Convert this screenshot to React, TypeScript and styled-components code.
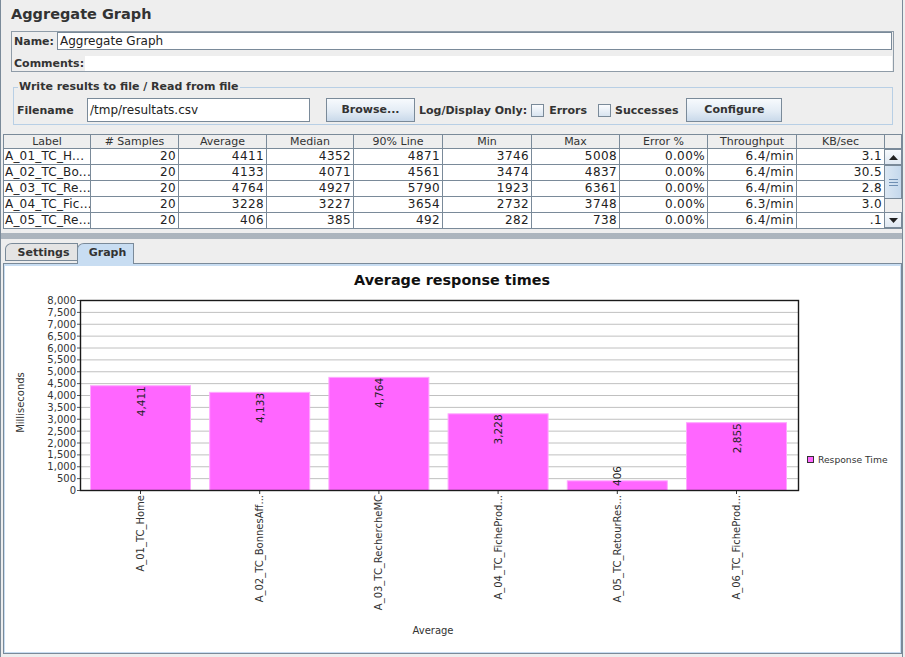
import React from 'react';
import styled, { createGlobalStyle } from 'styled-components';

const GlobalStyle = createGlobalStyle`
  body {
    margin: 0;
    background: #eeeeee;
    font-family: 'DejaVu Sans', sans-serif;
    color: #333333;
  }
`;

const Frame = styled.div`
  width: 903px;
  height: 657px;
  box-sizing: border-box;
  border-left: 1px solid #7a8a99;
  border-right: 1px solid #7a8a99;
  display: flex;
  flex-direction: column;
  overflow: hidden;
`;

const Title = styled.div`
  height: 31px;
  box-sizing: border-box;
  padding: 6px 0 0 10px;
  font-weight: bold;
  font-size: 14.5px;
  line-height: 17px;
`;

const NamePanel = styled.div`
  margin: 0 8px 0 10px;
  height: 41px;
  box-sizing: border-box;
  border: 1px solid #8f9ca8;
  padding: 0 1px;
  display: flex;
  flex-direction: column;
  gap: 6px;
`;

const FieldRow = styled.div<{ $h: number }>`
  display: flex;
  align-items: center;
  height: ${p => p.$h}px;
`;

const BoldLabel = styled.span<{ $w?: number; $ml?: number }>`
  font-weight: bold;
  font-size: 11px;
  white-space: nowrap;
  flex-shrink: 0;
  ${p => (p.$w ? `width: ${p.$w}px;` : '')}
  margin-left: ${p => p.$ml ?? 0}px;
`;

const TextField = styled.div<{ $w?: number; $h: number }>`
  ${p => (p.$w ? `width: ${p.$w}px;` : 'flex: 1;')}
  height: ${p => p.$h}px;
  box-sizing: border-box;
  background: #ffffff;
  border: 1px solid #7a8a99;
  padding-left: 2px;
  font-size: 12px;
  line-height: ${p => p.$h - 2}px;
  white-space: nowrap;
  color: #222;
`;

const BlankArea = styled.div`
  flex: 1;
  height: 15px;
  background: #ffffff;
`;

const FileBox = styled.fieldset`
  margin: 8px 9px 0 12px;
  padding: 4px 3px 2px 3px;
  border: 1px solid #b8cfe5;
  min-width: 0;
`;

const Legend = styled.legend`
  margin-left: 1px;
  padding: 0 1px;
  font-weight: bold;
  font-size: 11px;
  line-height: 14px;
`;

const FileRow = styled.div`
  display: flex;
  align-items: center;
  height: 24px;
`;

const Button = styled.div<{ $w: number; $ml: number }>`
  width: ${p => p.$w}px;
  margin-left: ${p => p.$ml}px;
  height: 24px;
  box-sizing: border-box;
  border: 1px solid #7a8a99;
  background: linear-gradient(#f7fafd, #e3ecf5 55%, #c9d9ea);
  font-weight: bold;
  font-size: 11px;
  line-height: 22px;
  text-align: center;
  flex-shrink: 0;
`;

const CheckBox = styled.div<{ $ml: number }>`
  width: 13px;
  height: 13px;
  box-sizing: border-box;
  margin-left: ${p => p.$ml}px;
  border: 1px solid #7a8a99;
  background: linear-gradient(#fbfcfe, #d8e4f0);
  flex-shrink: 0;
`;

const Table = styled.div`
  margin: 9px 0 0 2px;
  border-left: 1px solid #7a8a99;
  border-top: 1px solid #7a8a99;
  display: grid;
  grid-template-columns: 87px 88px 88px 87px 89px 89px 88px 88px 89px 88px 17px;
  grid-template-rows: 14px repeat(5, 16px);
`;

const HeadCell = styled.div`
  box-sizing: border-box;
  border-right: 1px solid #7a8a99;
  border-bottom: 1px solid #7a8a99;
  background: #eeeeee;
  font-size: 11px;
  line-height: 13px;
  text-align: center;
  white-space: nowrap;
  overflow: hidden;
`;

const Cell = styled.div<{ $left?: boolean }>`
  box-sizing: border-box;
  border-right: 1px solid #7a8a99;
  border-bottom: 1px solid #7a8a99;
  background: #ffffff;
  font-size: 12px;
  line-height: 15px;
  letter-spacing: ${p => (p.$left ? 0.2 : 0.4)}px;
  text-align: ${p => (p.$left ? 'left' : 'right')};
  padding: ${p => (p.$left ? '0 0 0 1px' : '0 2px 0 0')};
  white-space: nowrap;
  overflow: hidden;
  color: #222;
`;

const ScrollBar = styled.div`
  grid-column: 11;
  grid-row: 2 / span 5;
  display: flex;
  flex-direction: column;
  background: #eeeeee;
  border-bottom: 1px solid #7a8a99;
`;

const ArrowButton = styled.div`
  height: 16px;
  box-sizing: border-box;
  border: 1px solid #7a8a99;
  border-left: none;
  background: linear-gradient(#f7fafd, #dfe8f2);
  display: flex;
  align-items: center;
  justify-content: center;
`;

const Track = styled.div`
  flex: 1;
  display: flex;
  flex-direction: column;
`;

const Thumb = styled.div`
  height: 34px;
  box-sizing: border-box;
  border: 1px solid #7a8a99;
  border-left: none;
  background: linear-gradient(90deg, #dbe7f3, #c4d8ec);
  display: flex;
  flex-direction: column;
  align-items: center;
  justify-content: center;
  gap: 2px;
`;

const Grip = styled.div`
  width: 9px;
  height: 1px;
  background: #6f8fb3;
`;

const Splitter = styled.div`
  height: 11px;
  padding-top: 4px;
  box-sizing: border-box;
`;

const Dots = styled.div`
  height: 6px;
  background-image: radial-gradient(circle, #aab3bc 0.7px, transparent 0.9px);
  background-size: 2px 2px;
`;

const TabRow = styled.div`
  display: flex;
  align-items: flex-start;
  height: 20px;
  margin: 3px 0 0 4px;
`;

const Tab = styled.div<{ $active?: boolean; $w: number }>`
  width: ${p => p.$w}px;
  height: ${p => (p.$active ? 21 : 18)}px;
  margin-left: ${p => (p.$active ? -1 : 0)}px;
  box-sizing: border-box;
  border: 1px solid #7a8a99;
  border-bottom: ${p => (p.$active ? 'none' : '1px solid #7a8a99')};
  border-top-left-radius: 7px 6px;
  background: ${p => (p.$active ? '#c8ddf2' : '#e4e4e4')};
  position: relative;
  z-index: 1;
  font-weight: bold;
  font-size: 11px;
  line-height: 17px;
  text-align: center;
  padding-left: 4px;
`;

const TabPanel = styled.div`
  margin-left: 2px;
  height: 391px;
  box-sizing: border-box;
  border: 1px solid #7a8a99;
  background: #c8ddf2;
  padding: 2px 1px 1px 1px;
  display: flex;
`;

const ChartArea = styled.div`
  flex: 1;
  background: #ffffff;
  overflow: hidden;
`;

const headers = ['Label', '# Samples', 'Average', 'Median', '90% Line', 'Min', 'Max', 'Error %', 'Throughput', 'KB/sec'];

const rows = [
  ['A_01_TC_H...', '20', '4411', '4352', '4871', '3746', '5008', '0.00%', '6.4/min', '3.1'],
  ['A_02_TC_Bo...', '20', '4133', '4071', '4561', '3474', '4837', '0.00%', '6.4/min', '30.5'],
  ['A_03_TC_Re...', '20', '4764', '4927', '5790', '1923', '6361', '0.00%', '6.4/min', '2.8'],
  ['A_04_TC_Fic...', '20', '3228', '3227', '3654', '2732', '3748', '0.00%', '6.3/min', '3.0'],
  ['A_05_TC_Re...', '20', '406', '385', '492', '282', '738', '0.00%', '6.4/min', '.1'],
];

const bars = [
  { label: 'A_01_TC_Home', value: 4411 },
  { label: 'A_02_TC_BonnesAff...', value: 4133 },
  { label: 'A_03_TC_RechercheMC', value: 4764 },
  { label: 'A_04_TC_FicheProd...', value: 3228 },
  { label: 'A_05_TC_RetourRes...', value: 406 },
  { label: 'A_06_TC_FicheProd...', value: 2855 },
];

const PLOT = { left: 75, top: 34, right: 793, bottom: 224 };
const MAX = 8000;
const yOf = (v: number) => PLOT.bottom - (v / MAX) * (PLOT.bottom - PLOT.top);
const fmt = (v: number) => v.toLocaleString('en-US');

const Chart: React.FC = () => {
  const ticks = Array.from({ length: 17 }, (_, i) => i * 500);
  const chartFont = "'DejaVu Sans', sans-serif";
  return (
    <svg width="894" height="386" style={{ display: 'block' }}>
      <text x={447} y={19} textAnchor="middle" fontFamily={chartFont} fontWeight="bold" fontSize="14.4" fill="#111">
        Average response times
      </text>
      {ticks.slice(1).map(v => (
        <line key={v} x1={PLOT.left} x2={PLOT.right} y1={yOf(v) + 0.5} y2={yOf(v) + 0.5} stroke="#c0c0c0" />
      ))}
      {ticks.map(v => (
        <g key={v}>
          <line x1={72} x2={PLOT.left} y1={yOf(v) + 0.5} y2={yOf(v) + 0.5} stroke="#555" />
          <text x={71} y={yOf(v) + 0.5} textAnchor="end" dominantBaseline="central" fontFamily={chartFont} fontSize="10" fill="#333">
            {fmt(v)}
          </text>
        </g>
      ))}
      <text
        transform="translate(15 136.5) rotate(-90)"
        textAnchor="middle"
        dominantBaseline="central"
        fontFamily={chartFont}
        fontSize="10"
        fill="#333"
      >
        Milliseconds
      </text>
      {bars.map((b, i) => {
        const x = 85 + i * 119.2;
        const top = yOf(b.value);
        const cx = x + 50.5;
        const short = PLOT.bottom - top < 30;
        return (
          <g key={b.label}>
            <rect x={x + 0.5} y={top + 0.5} width={100} height={PLOT.bottom - top} fill="#ff66ff" stroke="#ffa6ff" />
            <text
              transform={`translate(${cx} ${short ? 200 : top + 1}) rotate(-90)`}
              textAnchor="end"
              dominantBaseline="central"
              fontFamily={chartFont}
              fontSize="10.5"
              fill="#222"
            >
              {fmt(b.value)}
            </text>
            <line x1={cx} x2={cx} y1={PLOT.bottom} y2={PLOT.bottom + 4} stroke="#333" />
            <text
              transform={`translate(${cx} 229) rotate(-90)`}
              textAnchor="end"
              dominantBaseline="central"
              fontFamily={chartFont}
              fontSize="10"
              fill="#333"
            >
              {b.label}
            </text>
          </g>
        );
      })}
      <rect
        x={PLOT.left + 0.5}
        y={PLOT.top + 0.5}
        width={PLOT.right - PLOT.left}
        height={PLOT.bottom - PLOT.top}
        fill="none"
        stroke="#1a1a1a"
        strokeWidth="1.4"
      />
      <text x={428} y={368} textAnchor="middle" fontFamily={chartFont} fontSize="10" fill="#333">
        Average
      </text>
      <rect x={802.5} y={190.5} width={6} height={6} fill="#ff66ff" stroke="#333" />
      <text x={813} y={193.5} dominantBaseline="central" fontFamily={chartFont} fontSize="9.2" fill="#333">
        Response Time
      </text>
    </svg>
  );
};

const Arrow: React.FC<{ up?: boolean }> = ({ up }) => (
  <svg width="9" height="5">
    <polygon points={up ? '0,5 4.5,0 9,5' : '0,0 4.5,5 9,0'} fill="#222" />
  </svg>
);

const App: React.FC = () => {
  return (
    <>
      <GlobalStyle />
      <Frame>
        <Title>Aggregate Graph</Title>
        <NamePanel>
          <FieldRow $h={18}>
            <BoldLabel $w={43} $ml={1}>Name:</BoldLabel>
            <TextField $h={18}>Aggregate Graph</TextField>
          </FieldRow>
          <FieldRow $h={15}>
            <BoldLabel $w={71} $ml={1}>Comments:</BoldLabel>
            <BlankArea />
          </FieldRow>
        </NamePanel>

        <FileBox>
          <Legend>Write results to file / Read from file</Legend>
          <FileRow>
            <BoldLabel $w={70}>Filename</BoldLabel>
            <TextField $w={223} $h={24}>/tmp/resultats.csv</TextField>
            <Button $w={89} $ml={16}>Browse...</Button>
            <BoldLabel $ml={4}>Log/Display Only:</BoldLabel>
            <CheckBox $ml={4} />
            <BoldLabel $ml={5}>Errors</BoldLabel>
            <CheckBox $ml={11} />
            <BoldLabel $ml={4}>Successes</BoldLabel>
            <Button $w={96} $ml={8}>Configure</Button>
          </FileRow>
        </FileBox>

        <Table>
          {headers.map(h => (
            <HeadCell key={h}>{h}</HeadCell>
          ))}
          <HeadCell />
          {rows.map(r =>
            r.map((c, i) => (
              <Cell key={r[0] + i} $left={i === 0} style={{ gridColumn: i + 1 }}>
                {c}
              </Cell>
            ))
          )}
          <ScrollBar>
            <ArrowButton>
              <Arrow up />
            </ArrowButton>
            <Track>
              <Thumb>
                <Grip />
                <Grip />
                <Grip />
              </Thumb>
            </Track>
            <ArrowButton>
              <Arrow />
            </ArrowButton>
          </ScrollBar>
        </Table>

        <Splitter>
          <Dots />
        </Splitter>

        <TabRow>
          <Tab $w={73}>Settings</Tab>
          <Tab $w={57} $active>
            Graph
          </Tab>
        </TabRow>
        <TabPanel>
          <ChartArea>
            <Chart />
          </ChartArea>
        </TabPanel>
      </Frame>
    </>
  );
};

export default App;
